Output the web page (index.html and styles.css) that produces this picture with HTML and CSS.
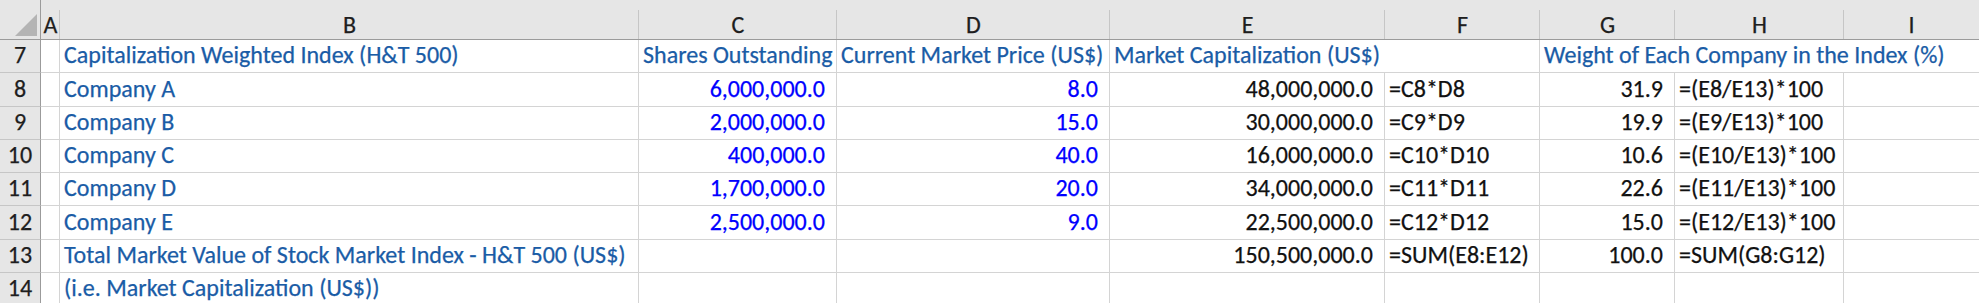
FILE: index.html
```html
<!DOCTYPE html>
<html>
<head>
<title>H&amp;T 500 index</title>
<link rel="stylesheet" href="styles.css">
</head>
<body>
<div class="sheet">
	<div class="corner"><div class="tri"></div></div>
	<div class="colhead">A</div>
	<div class="colhead">B</div>
	<div class="colhead">C</div>
	<div class="colhead">D</div>
	<div class="colhead">E</div>
	<div class="colhead">F</div>
	<div class="colhead">G</div>
	<div class="colhead">H</div>
	<div class="colhead last">I</div>

	<div class="rowhead">7</div>
	<div class="cell"></div>
	<div class="cell lbl">Capitalization Weighted Index (H&amp;T 500)</div>
	<div class="cell lbl">Shares Outstanding</div>
	<div class="cell lbl">Current Market Price (US$)</div>
	<div class="cell lbl span2">Market Capitalization (US$)</div>
	<div class="cell lbl span3">Weight of Each Company in the Index (%)</div>

	<div class="rowhead">8</div>
	<div class="cell"></div>
	<div class="cell lbl">Company A</div>
	<div class="cell inp">6,000,000.0</div>
	<div class="cell inp">8.0</div>
	<div class="cell num">48,000,000.0</div>
	<div class="cell fx">=C8*D8</div>
	<div class="cell num">31.9</div>
	<div class="cell fx">=(E8/E13)*100</div>
	<div class="cell last"></div>

	<div class="rowhead">9</div>
	<div class="cell"></div>
	<div class="cell lbl">Company B</div>
	<div class="cell inp">2,000,000.0</div>
	<div class="cell inp">15.0</div>
	<div class="cell num">30,000,000.0</div>
	<div class="cell fx">=C9*D9</div>
	<div class="cell num">19.9</div>
	<div class="cell fx">=(E9/E13)*100</div>
	<div class="cell last"></div>

	<div class="rowhead">10</div>
	<div class="cell"></div>
	<div class="cell lbl">Company C</div>
	<div class="cell inp">400,000.0</div>
	<div class="cell inp">40.0</div>
	<div class="cell num">16,000,000.0</div>
	<div class="cell fx">=C10*D10</div>
	<div class="cell num">10.6</div>
	<div class="cell fx">=(E10/E13)*100</div>
	<div class="cell last"></div>

	<div class="rowhead">11</div>
	<div class="cell"></div>
	<div class="cell lbl">Company D</div>
	<div class="cell inp">1,700,000.0</div>
	<div class="cell inp">20.0</div>
	<div class="cell num">34,000,000.0</div>
	<div class="cell fx">=C11*D11</div>
	<div class="cell num">22.6</div>
	<div class="cell fx">=(E11/E13)*100</div>
	<div class="cell last"></div>

	<div class="rowhead">12</div>
	<div class="cell"></div>
	<div class="cell lbl">Company E</div>
	<div class="cell inp">2,500,000.0</div>
	<div class="cell inp">9.0</div>
	<div class="cell num">22,500,000.0</div>
	<div class="cell fx">=C12*D12</div>
	<div class="cell num">15.0</div>
	<div class="cell fx">=(E12/E13)*100</div>
	<div class="cell last"></div>

	<div class="rowhead">13</div>
	<div class="cell"></div>
	<div class="cell lbl">Total Market Value of Stock Market Index - H&amp;T 500 (US$)</div>
	<div class="cell"></div>
	<div class="cell"></div>
	<div class="cell num">150,500,000.0</div>
	<div class="cell fx">=SUM(E8:E12)</div>
	<div class="cell num">100.0</div>
	<div class="cell fx">=SUM(G8:G12)</div>
	<div class="cell last"></div>

	<div class="rowhead">14</div>
	<div class="cell"></div>
	<div class="cell lbl">(i.e. Market Capitalization (US$))</div>
	<div class="cell"></div>
	<div class="cell"></div>
	<div class="cell"></div>
	<div class="cell"></div>
	<div class="cell"></div>
	<div class="cell"></div>
	<div class="cell last"></div>
</div>
</body>
</html>
```

FILE: styles.css
```css
body {
	margin: 0;
	background: #fff;
	overflow: hidden;
}
.sheet {
	display: grid;
	grid-template-columns: 41px 19px 579px 198px 273px 275px 155px 135px 169px 1fr;
	grid-template-rows: 40px repeat(8, 33.3px);
	font-family: Carlito, Calibri, Lato, sans-serif;
	font-size: 24px;
	-webkit-text-stroke: 0.25px currentColor;
}
.corner {
	background: #e6e6e6;
	border-right: 1px solid #9b9b9b;
	border-bottom: 1px solid #9b9b9b;
	display: flex;
	align-items: flex-end;
	justify-content: flex-end;
	padding: 0 3px 3px 0;
}
.tri {
	width: 0;
	height: 0;
	border-left: 22px solid transparent;
	border-bottom: 22px solid #b4b4b4;
}
.colhead {
	background: #e6e6e6;
	color: #1e1e1e;
	border-bottom: 1px solid #9b9b9b;
	text-align: center;
	line-height: 30px;
	padding-top: 10px;
	position: relative;
}
.colhead::after {
	content: '';
	position: absolute;
	right: 0;
	top: 10px;
	bottom: 0;
	width: 1px;
	background: #c6c6c6;
}
.colhead.last::after { display: none; }
.rowhead {
	background: #e6e6e6;
	color: #1e1e1e;
	border-right: 1px solid #9b9b9b;
	border-bottom: 1px solid #c6c6c6;
	display: flex;
	align-items: flex-end;
	justify-content: center;
	padding-bottom: 3px;
}
.cell {
	border-right: 1px solid #d4d4d4;
	border-bottom: 1px solid #d4d4d4;
	display: flex;
	align-items: flex-end;
	padding: 0 4px 3px;
	white-space: nowrap;
}
.cell.last { border-right: none; }
.span2 {
	grid-column: span 2;
}
.span3 {
	grid-column: span 3;
	border-right: none;
}
.lbl { color: #1a5ca6; }
.inp {
	color: #0000ff;
	justify-content: flex-end;
	padding-right: 11px;
}
.num {
	color: #111;
	justify-content: flex-end;
	padding-right: 11px;
}
.fx { color: #111; }
```
